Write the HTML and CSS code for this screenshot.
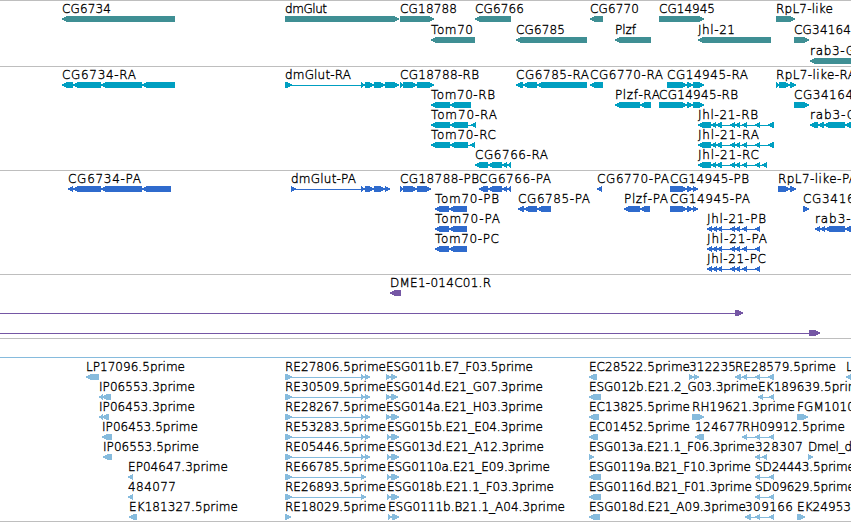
FILE: index.html
```
<!DOCTYPE html>
<html lang="en">

<head>
    <meta charset="UTF-8">
    <meta name="viewport" content="width=device-width, initial-scale=1.0">
    <title>Genome Browser</title>
    <link rel="stylesheet" href="styles.css">
</head>

<body>

    <!-- One section per annotation track -->
    <main class="browser">
        <section class="track genes"><svg id="genes"></svg></section>
        <section class="track transcripts"><svg id="transcripts"></svg></section>
        <section class="track proteins"><svg id="proteins"></svg></section>
        <section class="track bacs"><svg id="bacs"></svg></section>
        <section class="track empty"></section>
        <section class="track ests"><svg id="ests"></svg></section>
    </main>

    <script src="tracks.js"></script>

</body>

</html>
```
FILE: styles.css
```
body {
    margin: 0;
    background: #fff;
    overflow: hidden;
}

.browser {
    display: flex;
    flex-direction: column;
    width: 851px;
    height: 522px;
    box-sizing: border-box;
    border-bottom: 1px solid #bebebe;
}

.track {
    box-sizing: border-box;
    border-top: 1px solid #bebebe;
}

.track svg {
    display: block;
    width: 100%;
    height: 100%;
}

.track text {
    font-family: "DejaVu Sans Light", "DejaVu Sans", sans-serif;
    font-size: 12px;
    font-weight: 200;
    fill: #000;
    stroke: #000;
    stroke-width: 0.35px;
}

.track path {
    shape-rendering: crispEdges;
}

.genes {
    height: 66px;
    fill: #3f8f94;
}

.transcripts {
    height: 104px;
    fill: #009fc1;
}

.proteins {
    height: 104px;
    fill: #2f6bcd;
}

.bacs {
    height: 64px;
    fill: #7557a5;
}

.empty {
    height: 19px;
}

.ests {
    height: 164px;
    padding-top: 1px;
    border-top-color: #86bbdd;
    fill: #86bbdd;
}
```
FILE: tracks.js
```
const SVG = 'http://www.w3.org/2000/svg';

// exons shared by several transcripts
const jh = [[711, 716], [716, 722], [730, 735], [735, 740], [742, 747], [755, 760]];
const jhCds = [[707, 712], [712, 717], [717, 722], [730, 735], [735, 740], [742, 747], [755, 760]];
const re = [[285, 292], [361, 365], [365, 370]];

// [label, label width, row, strand, exons]
const genes = [
    ['CG6734', 49, 0, '-', [[62, 175]]],
    ['dmGlut', 42, 0, '+', [[285, 399]]],
    ['CG18788', 57, 0, '+', [[400, 434]]],
    ['CG6766', 49, 0, '-', [[475, 511]]],
    ['CG6770', 49, 0, '-', [[590, 603]]],
    ['CG14945', 56, 0, '+', [[659, 704]]],
    ['RpL7-like', 57, 0, '+', [[776, 795]]],
    ['Tom70', 42, 1, '-', [[431, 475]]],
    ['CG6785', 49, 1, '-', [[516, 587]]],
    ['Plzf', 21, 1, '-', [[615, 651]]],
    ['Jhl-21', 37, 1, '-', [[698, 771]]],
    ['CG34164', 57, 1, '+', [[794, 809]]],
    ['rab3-GAP', 62, 2, '-', [[810, 870]]]
];

const transcripts = [
    ['CG6734-RA', 74, 0, '-', [[62, 73], [73, 101], [101, 142], [142, 175]]],
    ['dmGlut-RA', 66, 0, '+', [[285, 292], [361, 365], [365, 374], [374, 385], [385, 399]]],
    ['CG18788-RB', 79, 0, '+', [[400, 403], [403, 417], [417, 434]]],
    ['CG6785-RA', 73, 0, '-', [[516, 523], [523, 537], [537, 587]]],
    ['CG6770-RA', 73, 0, '-', [[590, 603]]],
    ['CG14945-RA', 81, 0, '+', [[667, 687], [687, 693], [693, 704]]],
    ['RpL7-like-RA', 80, 0, '+', [[776, 779], [779, 790], [790, 796]]],
    ['Tom70-RB', 64, 1, '-', [[431, 450], [450, 471]]],
    ['Plzf-RA', 45, 1, '-', [[615, 640], [640, 651]]],
    ['CG14945-RB', 79, 1, '+', [[659, 687], [687, 693], [693, 704]]],
    ['CG34164-RA', 81, 1, '+', [[794, 809]]],
    ['Tom70-RA', 66, 2, '-', [[431, 450], [450, 468], [471, 476]]],
    ['Jhl-21-RB', 60, 2, '-', [[698, 711], ...jh, [768, 774]]],
    ['rab3-GAP-RA', 86, 2, '-', [[810, 818], [818, 824], [824, 845], [845, 870]]],
    ['Tom70-RC', 65, 3, '-', [[431, 450], [450, 468], [470, 475]]],
    ['Jhl-21-RA', 61, 3, '-', [[698, 711], ...jh, [768, 774]]],
    ['CG6766-RA', 73, 4, '-', [[475, 488], [488, 502], [502, 507], [507, 511]]],
    ['Jhl-21-RC', 61, 4, '-', [[698, 711], ...jh, [762, 767]]]
];

const proteins = [
    ['CG6734-PA', 73, 0, '-', [[68, 73], [73, 101], [101, 142], [142, 171]]],
    ['dmGlut-PA', 65, 0, '+', [[291, 296], [361, 365], [365, 374], [374, 385], [385, 390]]],
    ['CG18788-PB', 79, 0, '+', [[400, 403], [403, 417], [417, 431]]],
    ['CG6766-PA', 72, 0, '-', [[479, 488], [488, 502], [502, 507], [507, 511]]],
    ['CG6770-PA', 72, 0, '-', [[597, 602]]],
    ['CG14945-PB', 79, 0, '+', [[670, 687], [687, 693], [693, 698]]],
    ['RpL7-like-PA', 79, 0, '+', [[778, 790], [790, 796]]],
    ['Tom70-PB', 64, 1, '-', [[435, 449], [449, 467]]],
    ['CG6785-PA', 72, 1, '-', [[518, 524], [524, 537], [537, 551]]],
    ['Plzf-PA', 44, 1, '-', [[624, 640], [640, 650]]],
    ['CG14945-PA', 80, 1, '+', [[670, 687], [687, 693], [693, 698]]],
    ['CG34164-PA', 81, 1, '+', [[803, 809]]],
    ['Tom70-PA', 65, 2, '-', [[435, 449], [449, 467]]],
    ['Jhl-21-PB', 59, 2, '-', jhCds],
    ['rab3-GAP-PA', 85, 2, '-', [[815, 820], [820, 825], [825, 845], [845, 870]]],
    ['Tom70-PC', 64, 3, '-', [[435, 449], [449, 467]]],
    ['Jhl-21-PA', 60, 3, '-', jhCds],
    ['Jhl-21-PC', 59, 4, '-', jhCds]
];

const bacs = [
    ['DME1-014C01.R', 101, 0, '-', [[390, 401]]],
    ['', 0, 1, '+', [[-10, -2], [735, 743]]],
    ['', 0, 2, '+', [[-10, -2], [809, 820]]]
];

const ests = [
    ['LP17096.5prime', 99, 0, '-', [[86, 99]]],
    ['RE27806.5prime', 101, 0, '+', re],
    ['ESG011b.E7_F03.5prime', 147, 0, '+', [[386, 391], [391, 397]]],
    ['EC28522.5prime', 101, 0, '-', [[589, 597]]],
    ['312235', 47, 0, '+', [[689, 694], [694, 699]]],
    ['RE28579.5prime', 101, 0, '-', [[735, 741], [742, 747], [755, 760], [768, 774]]],
    ['L', 7, 0, '-', [[846, 860]]],
    ['IP06553.3prime', 96, 1, '-', [[99, 103], [102, 111]]],
    ['RE30509.5prime', 101, 1, '+', re],
    ['ESG014d.E21_G07.3prime', 157, 1, '+', [[386, 391], [391, 398]]],
    ['ESG012b.E21.2_G03.3prime', 169, 1, '-', [[589, 601]]],
    ['EK189639.5prime', 109, 1, '-', [[758, 763], [769, 774]]],
    ['IP06453.3prime', 96, 2, '-', [[99, 103], [102, 109]]],
    ['RE28267.5prime', 101, 2, '+', re],
    ['ESG014a.E21_H03.3prime', 157, 2, '+', [[386, 391], [391, 399]]],
    ['EC13825.5prime', 101, 2, '-', [[589, 599]]],
    ['RH19621.3prime', 103, 2, '+', [[692, 704]]],
    ['FGM1010', 58, 2, '+', [[797, 808]]],
    ['IP06453.5prime', 96, 3, '-', [[102, 112]]],
    ['RE53283.5prime', 101, 3, '+', re],
    ['ESG015b.E21_E04.3prime', 156, 3, '+', [[387, 391], [391, 399]]],
    ['EC01452.5prime', 101, 3, '-', [[589, 598]]],
    ['124677', 48, 3, '-', [[695, 704]]],
    ['RH09912.5prime', 103, 3, '-', [[742, 747], [755, 760], [769, 774]]],
    ['IP06553.5prime', 96, 4, '-', [[103, 112]]],
    ['RE05446.5prime', 101, 4, '+', re],
    ['ESG013d.E21_A12.3prime', 157, 4, '+', [[387, 391], [391, 399]]],
    ['ESG013a.E21.1_F06.3prime', 166, 4, '+', [[589, 594]]],
    ['328307', 48, 4, '-', [[755, 760], [762, 767]]],
    ['Dmel_d', 44, 4, '+', [[808, 813]]],
    ['EP04647.3prime', 100, 5, '-', [[128, 133]]],
    ['RE66785.5prime', 101, 5, '+', [[285, 292], [361, 366]]],
    ['ESG0110a.E21_E09.3prime', 163, 5, '+', [[387, 391], [391, 399]]],
    ['ESG0119a.B21_F10.3prime', 162, 5, '-', [[589, 601]]],
    ['SD24443.5prime', 100, 5, '-', [[755, 760], [769, 774]]],
    ['484077', 48, 6, '-', [[128, 133]]],
    ['RE26893.5prime', 101, 6, '+', [[285, 292], [361, 366]]],
    ['ESG018b.E21.1_F03.3prime', 167, 6, '+', [[387, 391], [391, 399]]],
    ['ESG0116d.B21_F01.3prime', 163, 6, '-', [[589, 601]]],
    ['SD09629.5prime', 100, 6, '-', [[755, 760], [769, 774]]],
    ['EK181327.5prime', 109, 7, '-', [[129, 137]]],
    ['RE18029.5prime', 101, 7, '+', [[285, 291]]],
    ['ESG0111b.B21.1_A04.3prime', 177, 7, '+', [[388, 392], [392, 399]]],
    ['ESG018d.E21_A09.3prime', 157, 7, '-', [[589, 600]]],
    ['309166', 48, 7, '-', [[745, 751], [755, 760], [769, 774]]],
    ['EK24953', 54, 7, '+', [[797, 805]]]
];

// bar with a pointed end, 6px high
function exonPath(a, b, y, strand) {
    const head = Math.min(5, b - a);
    if (strand === '-') {
        return `M${a} ${y + 2.5}L${a + head} ${y}H${b}V${y + 6}H${a + head}L${a} ${y + 3.5}Z`;
    }
    return `M${b} ${y + 2.5}L${b - head} ${y}H${a}V${y + 6}H${b - head}L${b} ${y + 3.5}Z`;
}

function addPath(svg, d) {
    const path = document.createElementNS(SVG, 'path');
    path.setAttribute('d', d);
    svg.appendChild(path);
}

function drawTrack(id, features, rowHeight) {
    const svg = document.getElementById(id);
    features.forEach(([label, width, row, strand, exons]) => {
        const y = row * rowHeight + 15;
        const start = exons[0][0];
        const end = exons[exons.length - 1][1];

        // intron line, then the exons over it
        addPath(svg, `M${start + 1} ${y + 3}H${end - 1}v1H${start + 1}Z`);
        exons.forEach(([a, b]) => addPath(svg, exonPath(a, b, y, strand)));

        if (!label) return;
        const text = document.createElementNS(SVG, 'text');
        text.setAttribute('x', start);
        text.setAttribute('y', y - 3);
        text.setAttribute('textLength', width);
        text.textContent = label;
        svg.appendChild(text);
    });
}

drawTrack('genes', genes, 21);
drawTrack('transcripts', transcripts, 20);
drawTrack('proteins', proteins, 20);
drawTrack('bacs', bacs, 20);
drawTrack('ests', ests, 20);
```
